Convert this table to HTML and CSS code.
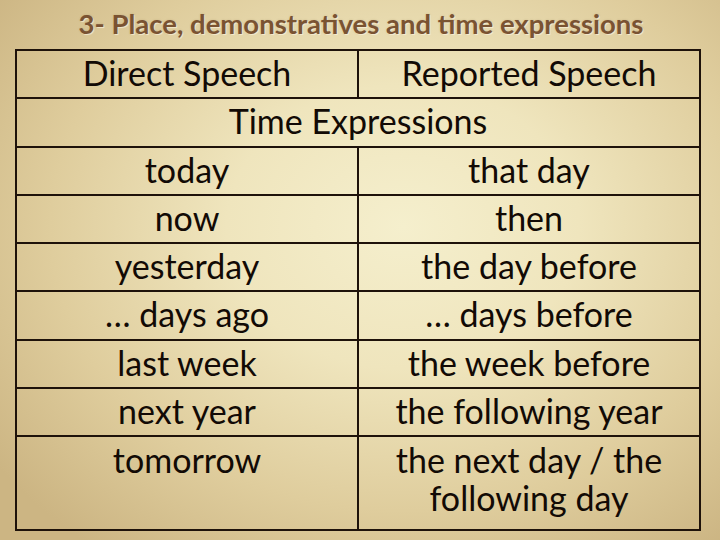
FILE: index.html
```html
<!DOCTYPE html>
<html lang="en">
<head>
<meta charset="utf-8">
<title>Place, demonstratives and time expressions</title>
<link rel="stylesheet" href="styles.css">
</head>
<body>
<main class="slide">
  <h1 class="title">3- Place, demonstratives and time expressions</h1>
  <table class="speech">
    <tr class="row"><td>Direct Speech</td><td>Reported Speech</td></tr>
    <tr class="row"><td colspan="2">Time Expressions</td></tr>
    <tr class="row"><td>today</td><td>that day</td></tr>
    <tr class="row"><td>now</td><td>then</td></tr>
    <tr class="row"><td>yesterday</td><td>the day before</td></tr>
    <tr class="row"><td>… days ago</td><td>… days before</td></tr>
    <tr class="row"><td>last week</td><td>the week before</td></tr>
    <tr class="row"><td>next year</td><td>the following year</td></tr>
    <tr class="row last"><td>tomorrow</td><td>the next day / the following day</td></tr>
  </table>
</main>
</body>
</html>
```
FILE: styles.css
```css
html, body {
  margin: 0;
  padding: 0;
}
body {
  width: 720px;
  height: 540px;
  overflow: hidden;
}
.slide {
  width: 720px;
  height: 540px;
  box-sizing: border-box;
  padding: 0 19px 0 15px;
  display: flex;
  flex-direction: column;
  background: radial-gradient(ellipse 70% 75% at 56% 42%, #f5efcd 0%, #efe5bd 35%, #dfcd9d 70%, #ccb583 100%);
  font-family: Lato, "Open Sans", sans-serif;
  color: #120a05;
}
.title {
  margin: 0;
  height: 49px;
  box-sizing: border-box;
  padding: 8px 0 0 6px;
  text-align: center;
  font-size: 27.5px;
  line-height: 32px;
  font-weight: 700;
  color: #7a5332;
  text-shadow: 1px 1px 1px rgba(255, 250, 230, 0.7), 0 0 2px rgba(120, 90, 50, 0.25);
  white-space: nowrap;
}
.speech {
  width: 686px;
  border-collapse: collapse;
  table-layout: fixed;
}
.speech td {
  border: 2px solid #1e120a;
  text-align: center;
  vertical-align: top;
  padding: 3px 0 0 0;
  font-size: 34px;
  line-height: 38px;
  height: 48.3px;
  box-sizing: border-box;
}
.speech td:first-child {
  width: 342px;
}
.speech .last td {
  height: 94px;
  padding-top: 4px;
}
```
